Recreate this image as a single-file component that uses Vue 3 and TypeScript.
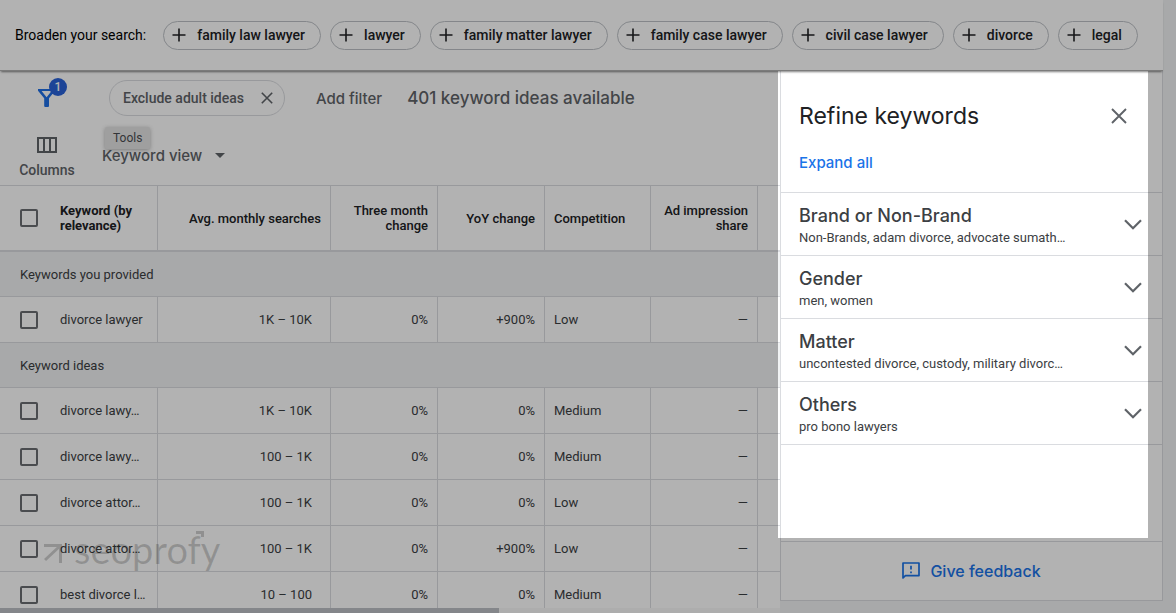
<script setup lang="ts">
interface KeywordRow {
  keyword: string
  searches: string
  threeMonth: string
  yoy: string
  competition: string
  share: string
}

interface KeywordGroup {
  title: string
  rows: KeywordRow[]
}

interface Refinement {
  title: string
  summary: string
}

const broaden: string[] = [
  'family law lawyer',
  'lawyer',
  'family matter lawyer',
  'family case lawyer',
  'civil case lawyer',
  'divorce',
  'legal',
]

const row = (keyword: string, searches: string, yoy: string, competition: string): KeywordRow => ({
  keyword,
  searches,
  threeMonth: '0%',
  yoy,
  competition,
  share: '—',
})

const groups: KeywordGroup[] = [
  {
    title: 'Keywords you provided',
    rows: [row('divorce lawyer', '1K – 10K', '+900%', 'Low')],
  },
  {
    title: 'Keyword ideas',
    rows: [
      row('divorce lawy…', '1K – 10K', '0%', 'Medium'),
      row('divorce lawy…', '100 – 1K', '0%', 'Medium'),
      row('divorce attor…', '100 – 1K', '0%', 'Low'),
      row('divorce attor…', '100 – 1K', '+900%', 'Low'),
      row('best divorce l…', '10 – 100', '0%', 'Medium'),
    ],
  },
]

const refinements: Refinement[] = [
  { title: 'Brand or Non-Brand', summary: 'Non-Brands, adam divorce, advocate sumath…' },
  { title: 'Gender', summary: 'men, women' },
  { title: 'Matter', summary: 'uncontested divorce, custody, military divorc…' },
  { title: 'Others', summary: 'pro bono lawyers' },
]
</script>

<template>
  <div class="page">
    <header class="broaden">
      <span class="broaden-label">Broaden your search:</span>
      <button v-for="term in broaden" :key="term" class="term" type="button">
        <svg width="14" height="14" viewBox="0 0 14 14" aria-hidden="true">
          <path d="M7 0.5v13M0.5 7h13" fill="none" stroke="currentColor" stroke-width="1.6" />
        </svg>
        <span>{{ term }}</span>
      </button>
    </header>

    <div class="workspace">
      <main class="results">
        <div class="filters">
          <button class="filter-button" type="button" aria-label="Filters, 1 applied">
            <svg width="18" height="20" viewBox="0 0 18 20" aria-hidden="true">
              <path d="M0 1h17v1.8L11 10.2V18a1 1 0 0 1-1 1H7.2a1 1 0 0 1-1-1v-7.8L0 2.8zM3.6 3l5 6.2 5-6.2z" fill="currentColor" fill-rule="evenodd" />
            </svg>
            <span class="badge">1</span>
          </button>
          <button class="applied" type="button">
            <span>Exclude adult ideas</span>
            <svg width="12" height="12" viewBox="0 0 12 12" aria-hidden="true">
              <path d="M0.8 0.8l10.4 10.4M11.2 0.8L0.8 11.2" fill="none" stroke="currentColor" stroke-width="1.6" />
            </svg>
          </button>
          <button class="add-filter" type="button">Add filter</button>
          <span class="count">401 keyword ideas available</span>
        </div>

        <div class="views">
          <button class="columns" type="button">
            <svg width="20" height="16" viewBox="0 0 20 16" aria-hidden="true">
              <path d="M1 1h18v14H1zM7 1v14M13 1v14" fill="none" stroke="currentColor" stroke-width="2" />
            </svg>
            <span>Columns</span>
          </button>
          <div class="view">
            <select class="view-select" aria-label="View">
              <option>Keyword view</option>
            </select>
            <svg width="10" height="5" viewBox="0 0 10 5" aria-hidden="true">
              <path d="M0 0h10L5 5z" fill="currentColor" />
            </svg>
            <span class="tooltip" role="tooltip">Tools</span>
          </div>
        </div>

        <div class="table-area">
          <table>
            <colgroup>
              <col class="c-check" />
              <col class="c-keyword" />
              <col class="c-searches" />
              <col class="c-metric" />
              <col class="c-metric" />
              <col class="c-competition" />
              <col class="c-metric" />
              <col />
            </colgroup>
            <thead>
              <tr>
                <th class="check"><input type="checkbox" aria-label="Select all keywords" /></th>
                <th class="keyword">Keyword (by relevance)</th>
                <th class="num">Avg. monthly searches</th>
                <th class="num">Three month change</th>
                <th class="num">YoY change</th>
                <th>Competition</th>
                <th class="num">Ad impression share</th>
                <th></th>
              </tr>
            </thead>
            <tbody v-for="group in groups" :key="group.title">
              <tr class="group">
                <th colspan="8" scope="rowgroup">{{ group.title }}</th>
              </tr>
              <tr v-for="(item, i) in group.rows" :key="i">
                <td class="check"><input type="checkbox" :aria-label="item.keyword" /></td>
                <td class="keyword">{{ item.keyword }}</td>
                <td class="num searches">{{ item.searches }}</td>
                <td class="num">{{ item.threeMonth }}</td>
                <td class="num">{{ item.yoy }}</td>
                <td>{{ item.competition }}</td>
                <td class="num">{{ item.share }}</td>
                <td></td>
              </tr>
            </tbody>
          </table>
          <div class="watermark" aria-hidden="true">
            <svg width="19" height="20" viewBox="0 0 19 20">
              <path d="M0 2.5h16.5V20M16 3L1 17" fill="none" stroke="currentColor" stroke-width="3" />
            </svg>
            <span>seoprofy</span>
            <svg class="tip" width="8" height="8" viewBox="0 0 8 8">
              <path d="M0 1.5h6.5V6" fill="none" stroke="currentColor" stroke-width="3" />
            </svg>
          </div>
        </div>
        <div class="scrollbar"><div class="thumb"></div></div>
      </main>

      <aside class="refine">
        <div class="panel">
          <div class="panel-head">
            <div class="panel-title">
              <h2>Refine keywords</h2>
              <button class="close" type="button" aria-label="Close">
                <svg width="16" height="16" viewBox="0 0 16 16" aria-hidden="true">
                  <path d="M1 1l14 14M15 1L1 15" fill="none" stroke="currentColor" stroke-width="1.9" />
                </svg>
              </button>
            </div>
            <button class="expand" type="button">Expand all</button>
          </div>
          <button v-for="item in refinements" :key="item.title" class="refinement" type="button">
            <span class="refinement-text">
              <span class="refinement-title">{{ item.title }}</span>
              <span class="refinement-summary">{{ item.summary }}</span>
            </span>
            <svg width="18" height="11" viewBox="0 0 18 11" aria-hidden="true">
              <path d="M1 1.2l8 8 8-8" fill="none" stroke="currentColor" stroke-width="2.2" />
            </svg>
          </button>
        </div>
        <div class="feedback-bar">
          <button class="feedback" type="button">
            <svg width="18" height="18" viewBox="0 0 18 18" aria-hidden="true">
              <path d="M1 16V1h16v12.6H3.4z" fill="none" stroke="currentColor" stroke-width="1.7" stroke-linejoin="round" />
              <path d="M9 3.8v3.8M9 9.4v1.8" fill="none" stroke="currentColor" stroke-width="1.7" />
            </svg>
            <span>Give feedback</span>
          </button>
        </div>
        <div class="spotlight"></div>
      </aside>
    </div>
  </div>
</template>

<style>
body {
  margin: 0;
  background: #f1f3f4;
}
</style>

<style scoped>
.page {
  display: flex;
  flex-direction: column;
  box-sizing: border-box;
  height: 100vh;
  padding-right: 13px;
  overflow: hidden;
  background: #f1f3f4;
  color: #3c4043;
  font-family: Roboto, "Liberation Sans", sans-serif;
  font-size: 13px;
}
.page * {
  box-sizing: border-box;
}
button,
select {
  margin: 0;
  padding: 0;
  border: 0;
  background: none;
  color: inherit;
  font: inherit;
}
svg {
  display: block;
  flex: none;
}

.broaden {
  position: relative;
  z-index: 1;
  display: flex;
  flex: none;
  align-items: center;
  gap: 9px;
  height: 71px;
  padding-left: 15px;
  border-bottom: 1px solid #b0b0b0;
  background: #fff;
  box-shadow: 0 2px 2px -1px rgba(0, 0, 0, 0.5);
  white-space: nowrap;
}
.broaden-label {
  margin-right: 8px;
  color: #000;
  font-size: 14px;
}
.term {
  display: flex;
  align-items: center;
  gap: 11px;
  height: 29px;
  padding: 0 15px 0 8px;
  border: 1px solid #bdc1c6;
  border-radius: 15px;
  color: #202124;
  font-size: 14px;
  font-weight: 500;
}

.workspace {
  display: flex;
  flex: 1;
  min-height: 0;
}
.results {
  display: flex;
  flex: 1;
  flex-direction: column;
  min-width: 0;
  overflow: hidden;
  background: #fff;
  color: #5f6368;
}
.filters {
  display: flex;
  flex: none;
  align-items: center;
  height: 54px;
  white-space: nowrap;
}
.filter-button {
  position: relative;
  display: flex;
  justify-content: center;
  width: 94px;
  margin-right: 15px;
  color: #1f6fe5;
}
.badge {
  position: absolute;
  top: -10px;
  left: 49px;
  width: 18px;
  height: 18px;
  border-radius: 50%;
  background: #2962d9;
  color: #fff;
  font-size: 12px;
  font-weight: 500;
  line-height: 18px;
  text-align: center;
}
.applied {
  display: flex;
  align-items: center;
  gap: 17px;
  height: 36px;
  padding: 0 11px 0 13px;
  border: 1px solid #dadce0;
  border-radius: 18px;
  font-size: 14px;
  font-weight: 500;
}
.add-filter {
  margin-left: 31px;
  font-family: Inter, sans-serif;
  font-size: 15px;
  font-weight: 500;
}
.count {
  margin-left: 25px;
  font-family: Inter, sans-serif;
  font-size: 17px;
  font-weight: 500;
}
.views {
  display: flex;
  flex: none;
  height: 60px;
}
.columns {
  display: flex;
  flex-direction: column;
  align-items: center;
  gap: 9px;
  width: 94px;
  padding-top: 12px;
  margin-right: 8px;
  font-size: 14px;
  font-weight: 500;
  line-height: 16px;
}
.view {
  position: relative;
  display: flex;
  align-items: center;
  gap: 12px;
  height: 60px;
  font-family: Inter, sans-serif;
  font-size: 15px;
  font-weight: 500;
}
.view-select {
  appearance: none;
}
.tooltip {
  position: absolute;
  top: 2px;
  left: 3px;
  padding: 0 8px;
  border-radius: 2px;
  background: #e4e4e4;
  box-shadow: 0 1px 4px rgba(0, 0, 0, 0.3);
  color: #4a4d51;
  font-family: Roboto, sans-serif;
  font-size: 12px;
  font-weight: 400;
  line-height: 22px;
}

.table-area {
  position: relative;
  flex: 1;
  min-height: 0;
  overflow: hidden;
}
table {
  width: 100%;
  border-collapse: separate;
  border-spacing: 0;
  border-top: 1px solid #dadce0;
  table-layout: fixed;
  color: #3c4043;
}
.c-check {
  width: 50px;
}
.c-keyword {
  width: 108px;
}
.c-searches {
  width: 173px;
}
.c-metric {
  width: 107px;
}
.c-competition {
  width: 106px;
}
th,
td {
  height: 46px;
  padding: 0 9px;
  border-right: 1px solid #dadce0;
  border-bottom: 1px solid #dadce0;
  font-weight: 400;
  line-height: 15px;
  text-align: left;
}
th:last-child,
td:last-child,
.check {
  border-right: 0;
}
thead th {
  height: 66px;
  border-bottom: 2px solid #dadce0;
  color: #202124;
  font-weight: 500;
}
.check {
  padding: 0 0 0 20px;
}
.keyword {
  padding: 0 4px 0 10px;
  white-space: nowrap;
}
thead .keyword {
  font-weight: 700;
  white-space: normal;
}
.num {
  text-align: right;
}
.searches {
  padding-right: 18px;
}
.group th {
  height: 45px;
  padding-left: 20px;
  background: #f1f3f4;
}
input[type="checkbox"] {
  display: block;
  width: 18px;
  height: 18px;
  margin: 0;
  border: 2px solid #6b6e72;
  border-radius: 2px;
  appearance: none;
}
.watermark {
  position: absolute;
  bottom: 37px;
  left: 44px;
  display: flex;
  align-items: center;
  gap: 11px;
  color: rgba(0, 0, 0, 0.19);
  font-family: Lato, sans-serif;
  font-size: 38px;
  line-height: 44px;
  pointer-events: none;
}
.watermark svg:first-child {
  margin-top: 8px;
}
.tip {
  position: absolute;
  top: 4px;
  right: 16px;
}
.scrollbar {
  flex: none;
  height: 5px;
  background: #f8f8f8;
}
.thumb {
  width: 64%;
  height: 5px;
  background: #bdc1c6;
}

.refine {
  position: relative;
  display: flex;
  flex: none;
  flex-direction: column;
  width: 383px;
  padding-bottom: 12px;
}
.panel {
  flex: 1;
  min-height: 0;
  border: solid #dadce0;
  border-width: 0 1px;
  background: #fff;
}
.panel-head {
  height: 122px;
  padding: 28px 19px 0 18px;
  border-bottom: 1px solid #dadce0;
}
.panel-title {
  display: flex;
  align-items: center;
  justify-content: space-between;
  padding-right: 16px;
}
h2 {
  margin: 0;
  color: #202124;
  font-family: Inter, sans-serif;
  font-size: 23px;
  font-weight: 400;
  line-height: 34px;
}
.close {
  color: #5f6368;
}
.expand {
  margin-top: 20px;
  color: #1a73e8;
  font-family: Inter, sans-serif;
  font-size: 15px;
  font-weight: 500;
  line-height: 20px;
}
.refinement {
  display: flex;
  align-items: center;
  justify-content: space-between;
  width: 100%;
  min-height: 63px;
  padding: 0 20px 0 18px;
  border-bottom: 1px solid #dadce0;
  text-align: left;
}
.refinement svg {
  color: #5f6368;
}
.refinement-text {
  display: flex;
  flex-direction: column;
  padding-top: 3px;
}
.refinement-title {
  font-family: Inter, sans-serif;
  font-size: 18px;
  font-weight: 500;
  line-height: 24px;
}
.refinement-summary {
  font-size: 13px;
  line-height: 20px;
}
.feedback-bar {
  display: flex;
  flex: none;
  align-items: center;
  justify-content: center;
  height: 60px;
  border: 1px solid #dadce0;
  background: #fff;
}
.feedback {
  display: flex;
  align-items: center;
  gap: 10px;
  color: #1a73e8;
  font-family: Inter, sans-serif;
  font-size: 16px;
  font-weight: 500;
}
.spotlight {
  position: absolute;
  z-index: 2;
  top: 0;
  right: 15px;
  bottom: 75px;
  left: -2px;
  box-shadow: 0 0 0 100vmax rgba(0, 0, 0, 0.3);
  pointer-events: none;
}
</style>
